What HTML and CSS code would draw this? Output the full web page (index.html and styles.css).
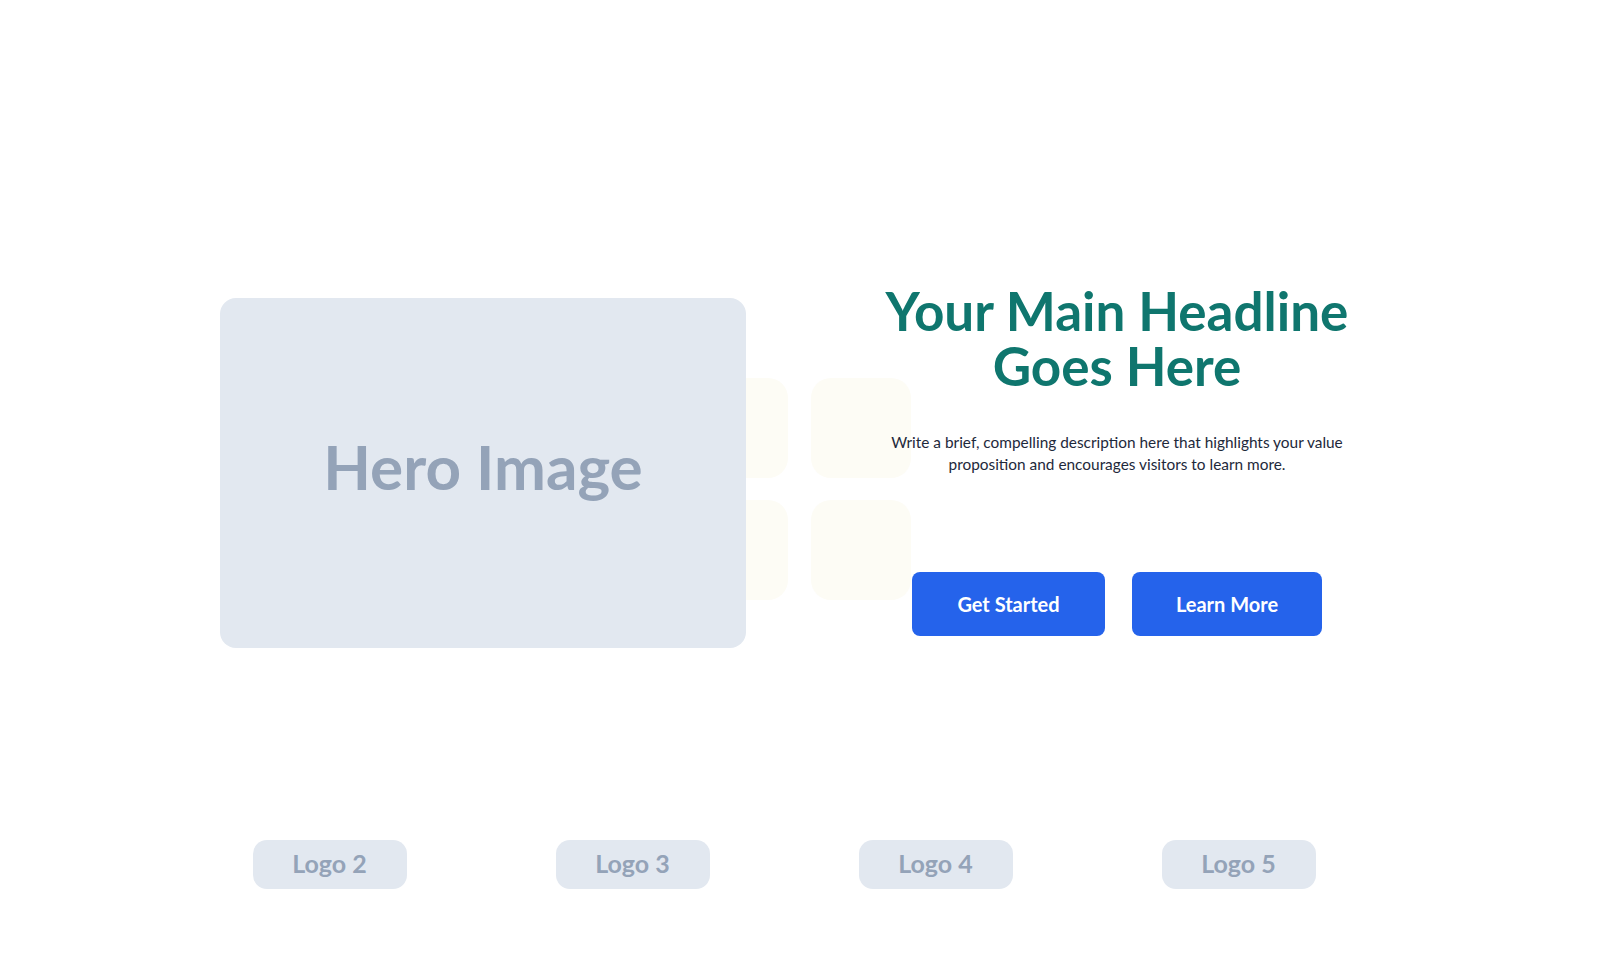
FILE: index.html
```html
<!DOCTYPE html>
<html lang="en">
<head>
    <meta charset="UTF-8">
    <meta name="viewport" content="width=device-width, initial-scale=1.0">
    <title>Landing Page</title>
    <link rel="stylesheet" href="styles.css">
</head>
<body>
    <main class="hero">
        <!-- Left: image placeholder -->
        <div class="hero-media">
            <div class="deco-grid">
                <span></span><span></span><span></span><span></span>
            </div>
            <div class="hero-image">Hero Image</div>
        </div>

        <!-- Right: copy and actions -->
        <div class="hero-copy">
            <h1>Your Main Headline<br>Goes Here</h1>
            <p>Write a brief, compelling description here that highlights your value proposition and encourages visitors to learn more.</p>
            <div class="actions">
                <a href="#" class="btn btn-start">Get Started</a>
                <a href="#" class="btn btn-more">Learn More</a>
            </div>
        </div>
    </main>

    <!-- Logo strip -->
    <section class="logos">
        <div class="logo-item">Logo 2</div>
        <div class="logo-item">Logo 3</div>
        <div class="logo-item">Logo 4</div>
        <div class="logo-item">Logo 5</div>
    </section>
</body>
</html>
```

FILE: styles.css
```css
body {
    margin: 0;
    background-color: #ffffff;
    font-family: Lato, "Noto Sans", Arial, sans-serif;
    min-height: 100vh;
}

.hero {
    width: 1160px;
    margin: 0 auto;
    padding-top: 280px;
    display: grid;
    grid-template-columns: 526px 526px;
    column-gap: 108px;
    align-items: start;
}

.hero-media {
    position: relative;
    margin-top: 18px;
}

.deco-grid {
    position: absolute;
    left: 468px;
    top: 80px;
    display: grid;
    grid-template-columns: 100px 100px;
    gap: 22px 23px;
    z-index: 0;
}

.deco-grid span {
    display: block;
    width: 100px;
    height: 100px;
    border-radius: 20px;
    background-color: #fdfcf5;
}

.hero-image {
    position: relative;
    z-index: 1;
    height: 336px;
    padding-bottom: 14px;
    border-radius: 16px;
    background-color: #e2e8f0;
    color: #94a3b8;
    font-size: 62px;
    font-weight: 700;
    display: flex;
    justify-content: center;
    align-items: center;
}

.hero-copy {
    position: relative;
    z-index: 1;
    padding-top: 3px;
    text-align: center;
}

.hero-copy h1 {
    margin: 0;
    color: #0f766e;
    font-size: 53px;
    line-height: 55px;
    font-weight: 700;
}

.hero-copy p {
    margin: 38px auto 0;
    width: 480px;
    color: #1e293b;
    font-size: 15.4px;
    line-height: 22px;
}

.actions {
    margin-top: 97px;
    display: flex;
    justify-content: center;
    gap: 27px;
}

.btn {
    display: flex;
    justify-content: center;
    align-items: center;
    height: 64px;
    border-radius: 8px;
    background-color: #2563eb;
    color: #fff;
    font-size: 20px;
    font-weight: 700;
    text-decoration: none;
}

.btn-start {
    width: 193px;
}

.btn-more {
    width: 190px;
}

.logos {
    width: 1212px;
    margin: 192px 0 0 178px;
    display: grid;
    grid-template-columns: repeat(4, 1fr);
    justify-items: center;
}

.logo-item {
    width: 154px;
    height: 45px;
    padding-bottom: 4px;
    border-radius: 14px;
    background-color: #e2e8f0;
    color: #94a3b8;
    font-size: 25px;
    font-weight: 700;
    display: flex;
    justify-content: center;
    align-items: center;
}
```
